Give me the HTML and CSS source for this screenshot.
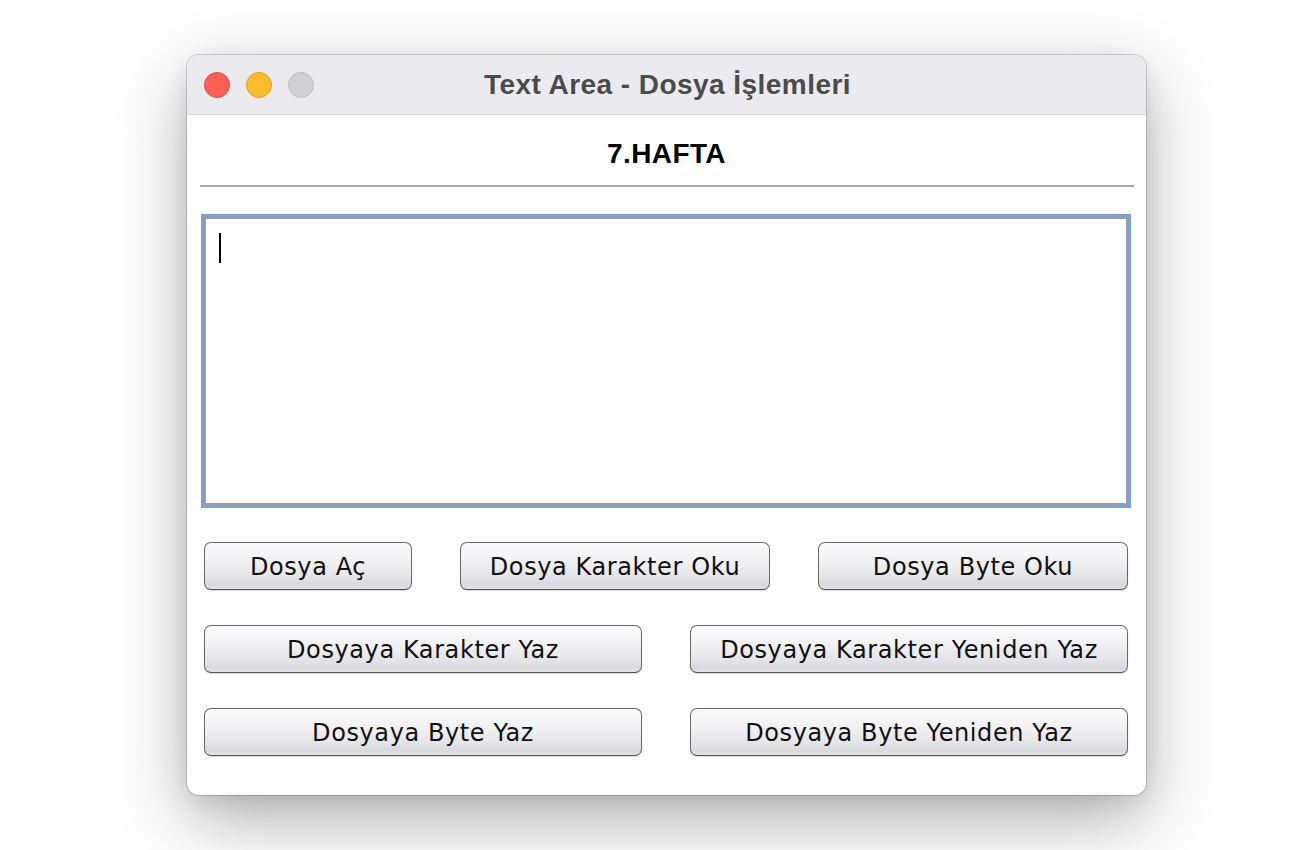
FILE: index.html
```html
<!DOCTYPE html>
<html lang="tr">
<head>
<meta charset="utf-8">
<title>Text Area - Dosya İşlemleri</title>
<link rel="stylesheet" href="styles.css">
</head>
<body>
<div class="window">
  <div class="titlebar">
    <div class="lights">
      <span class="light red"></span>
      <span class="light yellow"></span>
      <span class="light gray"></span>
    </div>
    <div class="title">Text Area - Dosya İşlemleri</div>
    <div></div>
  </div>
  <div class="content">
    <div class="heading">7.HAFTA</div>
    <div class="sep"></div>
    <div class="textarea"><span class="caret"></span></div>
    <div class="row row3">
      <button class="btn">Dosya Aç</button>
      <button class="btn">Dosya Karakter Oku</button>
      <button class="btn">Dosya Byte Oku</button>
    </div>
    <div class="row row2">
      <button class="btn">Dosyaya Karakter Yaz</button>
      <button class="btn">Dosyaya Karakter Yeniden Yaz</button>
    </div>
    <div class="row row2">
      <button class="btn">Dosyaya Byte Yaz</button>
      <button class="btn">Dosyaya Byte Yeniden Yaz</button>
    </div>
  </div>
</div>
</body>
</html>
```

FILE: styles.css
```css
html, body {
  margin: 0;
  padding: 0;
  background: #ffffff;
}
body {
  width: 1300px;
  height: 850px;
  overflow: hidden;
  padding: 55px 0 0 187px;
  box-sizing: border-box;
}
.window {
  width: 959px;
  height: 740px;
  border-radius: 12px;
  background: #ffffff;
  box-shadow: 0 0 0 1px rgba(0,0,0,0.16), 0 24px 70px rgba(0,0,0,0.32), 0 6px 20px rgba(0,0,0,0.08);
  overflow: hidden;
  display: flex;
  flex-direction: column;
}
.titlebar {
  height: 59px;
  border-bottom: 1px solid #dadadd;
  background: #ebebef;
  display: grid;
  grid-template-columns: 1fr auto 1fr;
  align-items: center;
}
.lights {
  display: flex;
  gap: 16px;
  padding-left: 17px;
  padding-top: 1px;
}
.light {
  width: 24px;
  height: 24px;
  border-radius: 50%;
  border: 1px solid transparent;
}
.light.red { background: #fe5f57; border-color: #e2463f; }
.light.yellow { background: #febc2e; border-color: #dfa123; }
.light.gray { background: #d1d1d5; border-color: #bdbdc1; }
.title {
  font-family: "Liberation Sans", Arial, sans-serif;
  font-weight: bold;
  font-size: 28px;
  color: #4b4b4d;
  letter-spacing: 0.45px;
  padding-top: 1px;
  padding-left: 2px;
}
.content {
  padding: 0 17px 0 17px;
  display: flex;
  flex-direction: column;
}
.heading {
  height: 70px;
  line-height: 62px;
  padding-top: 8px;
  box-sizing: border-box;
  text-align: center;
  font-family: "Liberation Sans", Arial, sans-serif;
  font-weight: bold;
  font-size: 28px;
  color: #000;
  letter-spacing: 0.4px;
}
.sep {
  height: 2px;
  background: #a9a9b1;
  margin: 0 -5px 0 -4px;
}
.textarea {
  margin-top: 30px;
  height: 288px;
  box-sizing: border-box;
  border: 2px solid #9c9ca4;
  box-shadow: 0 0 0 3px #7ba3cf;
  background: #fff;
  padding: 14px 0 0 13px;
  width: 924px;
}
.caret {
  display: block;
  width: 2px;
  height: 30px;
  background: #000;
}
.row {
  display: grid;
  gap: 48px;
  width: 924px;
}
.row3 {
  grid-template-columns: 208px 310px 310px;
  margin-top: 37px;
}
.row2 {
  grid-template-columns: 438px 438px;
  margin-top: 35px;
}
.btn {
  height: 48px;
  margin: 0;
  padding: 0;
  border: 1px solid #68686c;
  border-bottom-color: #535357;
  border-radius: 7px;
  background: linear-gradient(#fcfcfd 0%, #f1f1f3 40%, #e3e4e7 75%, #d9dadd 90%, #e2e3e6 100%);
  box-shadow: 0 1px 1px rgba(0,0,0,0.14), inset 0 1px 0 #ffffff;
  font-family: "DejaVu Sans", Verdana, sans-serif;
  font-size: 24px;
  color: #111;
  letter-spacing: 0.6px;
  padding-top: 1px;
}
```
